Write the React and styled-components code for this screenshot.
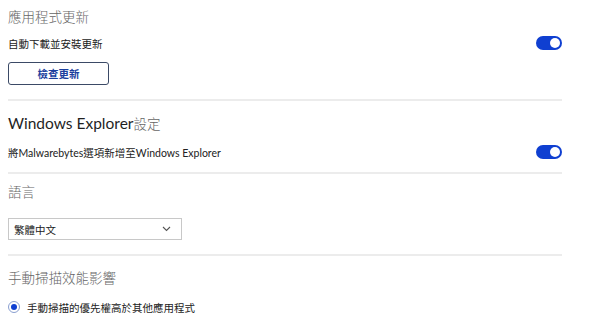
import styled, { createGlobalStyle } from "styled-components";

const GlobalStyle = createGlobalStyle`
  body {
    margin: 0;
    background: #ffffff;
    font-family: Lato, "Noto Sans CJK TC", sans-serif;
    color: #222;
  }
`;

const Page = styled.div`
  width: 554px;
  padding: 7px 0 0 8px;
`;

const Section = styled.section`
  display: flex;
  flex-direction: column;
  padding-top: ${(p) => p.$top || "0"};
  padding-bottom: ${(p) => p.$bottom || "0"};
  border-bottom: ${(p) => (p.$last ? "none" : "2px solid #ececec")};
`;

const Title = styled.h2`
  margin: 0 0 ${(p) => p.$gap || "10px"};
  font-size: 15.5px;
  font-weight: 400;
  line-height: 18px;
  height: 18px;
  color: #1f1f1f;

  .cjk {
    font-size: 13.5px;
    font-weight: 300;
    color: #666;
    font-family: "Noto Sans CJK TC", serif;
  }
`;

const Row = styled.div`
  display: flex;
  align-items: center;
  justify-content: space-between;
  height: 16px;
  margin-bottom: ${(p) => p.$gap || "0"};
`;

const Label = styled.span`
  font-size: 10.5px;
  color: #222;
`;

const Toggle = styled.div`
  width: 26px;
  height: 14px;
  border-radius: 7px;
  background: #0f3fd1;
  position: relative;

  &::after {
    content: "";
    position: absolute;
    top: 2px;
    right: 2px;
    width: 10px;
    height: 10px;
    border-radius: 50%;
    background: #fff;
  }
`;

const Button = styled.button`
  display: block;
  width: 101px;
  height: 23px;
  border: 1px solid #3b4a66;
  border-radius: 3px;
  background: #fff;
  color: #1b3f9e;
  font-family: "Noto Sans CJK TC", sans-serif;
  font-weight: 700;
  font-size: 10.5px;
  padding: 0;
`;

const Select = styled.div`
  width: 172px;
  height: 20px;
  border: 1px solid #c8c8c8;
  display: flex;
  align-items: center;
  justify-content: space-between;
  font-size: 10.5px;
  color: #222;

  span {
    padding-left: 5px;
  }

  svg {
    margin-right: 10px;
  }
`;

const Radio = styled.div`
  display: flex;
  align-items: center;
  height: 14px;
  gap: 7px;
  font-size: 10.5px;
  color: #222;
`;

const RadioDot = styled.span`
  width: 10px;
  height: 10px;
  border: 1px solid #8a9fd0;
  border-radius: 50%;
  display: flex;
  align-items: center;
  justify-content: center;

  &::after {
    content: "";
    width: 6px;
    height: 6px;
    border-radius: 50%;
    background: #0f3fd1;
  }
`;

export default function App() {
  return (
    <>
      <GlobalStyle />
      <Page>
        <Section $bottom="14px">
          <Title $gap="10px">
            <span className="cjk">應用程式更新</span>
          </Title>
          <Row $gap="11px">
            <Label>自動下載並安裝更新</Label>
            <Toggle />
          </Row>
          <Button>檢查更新</Button>
        </Section>
        <Section $top="13px" $bottom="12px">
          <Title $gap="12px">
            Windows Explorer<span className="cjk">設定</span>
          </Title>
          <Row>
            <Label>將Malwarebytes選項新增至Windows Explorer</Label>
            <Toggle />
          </Row>
        </Section>
        <Section $top="8px" $bottom="14px">
          <Title $gap="18px">
            <span className="cjk">語言</span>
          </Title>
          <Select>
            <span>繁體中文</span>
            <svg width="9" height="6" viewBox="0 0 9 6">
              <path d="M1 1l3.5 3.5L8 1" fill="none" stroke="#555" strokeWidth="1.1" />
            </svg>
          </Select>
        </Section>
        <Section $top="12px" $last>
          <Title $gap="14px">
            <span className="cjk">手動掃描效能影響</span>
          </Title>
          <Radio>
            <RadioDot />
            手動掃描的優先權高於其他應用程式
          </Radio>
        </Section>
      </Page>
    </>
  );
}
